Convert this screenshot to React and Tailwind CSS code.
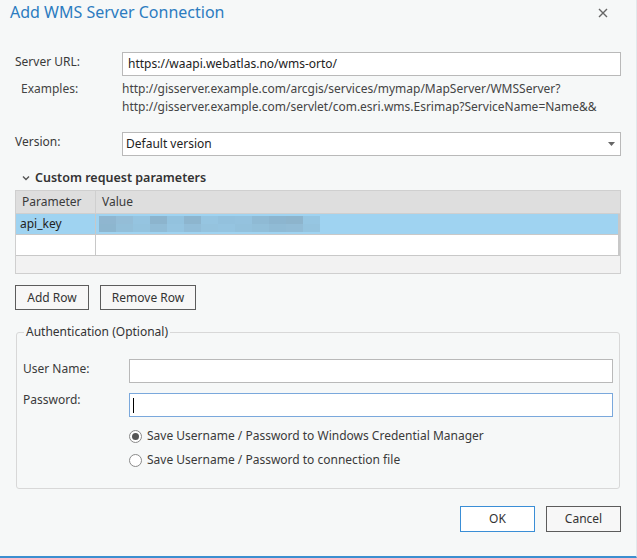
import { useState } from 'react';

const blurCells = [
    ['#8fb6d0', '#8db6cf'], ['#94bdd7', '#93bfd9'], ['#95c4e0', '#94c3de'], ['#8cb4cd', '#91bcd6'],
    ['#93c2de', '#95c4e0'], ['#8db5ce', '#92bdd8'], ['#96c5e1', '#95c3de'], ['#93c1dd', '#95c4e0'],
    ['#94c2de', '#93c1dc'], ['#8fbad4', '#92bfd9'], ['#8cb5cf', '#90bbd5'], ['#8db4cc', '#92bcd6'],
    ['#96c6e2', '#95c4df'],
];

export default function App() {
    const [saveTo, setSaveTo] = useState('windows');

    return (
        <div className="w-[637px] h-[558px] bg-[#f6f8f8] border-r border-r-[#e2e8eb] border-b-2 border-b-[#3c8fd0] font-['Noto_Sans',sans-serif] text-[12px] text-[#3a3a3a] flex flex-col">
            {/* title bar */}
            <div className="flex items-start justify-between h-[30px] pl-[10px] pr-[28px]">
                <h1 className="text-[16px] leading-[24px] text-[#2c7cc0]">Add WMS Server Connection</h1>
                <svg width="10" height="10" viewBox="0 0 10 10" className="mt-[8px]">
                    <path d="M1 1L9 9M9 1L1 9" stroke="#666" strokeWidth="1.4" />
                </svg>
            </div>

            <div className="px-[15px]">
                {/* server url */}
                <div className="flex items-start mt-[22px]">
                    <label className="w-[107px] pt-[1px] leading-[18px]">Server URL:</label>
                    <div className="flex-1 h-[24px] bg-white border border-[#b9b9b9] px-[5px] flex items-center text-[#222]">
                        https://waapi.webatlas.no/wms-orto/
                    </div>
                </div>

                {/* examples */}
                <div className="flex mt-[4px] leading-[18px] text-[#444]">
                    <span className="w-[107px] pl-[6px]">Examples:</span>
                    <div className="flex flex-col">
                        <span>http://gisserver.example.com/arcgis/services/mymap/MapServer/WMSServer?</span>
                        <span>http://gisserver.example.com/servlet/com.esri.wms.Esrimap?ServiceName=Name&amp;&amp;</span>
                    </div>
                </div>

                {/* version */}
                <div className="flex items-start mt-[16px]">
                    <label className="w-[107px] pt-[1px] leading-[18px]">Version:</label>
                    <div className="flex-1 h-[24px] bg-white border border-[#b9b9b9] pl-[3px] pr-[5px] flex items-center justify-between text-[#222]">
                        <span>Default version</span>
                        <svg width="7" height="4" viewBox="0 0 7 4">
                            <path d="M0 0H7L3.5 4Z" fill="#666" />
                        </svg>
                    </div>
                </div>

                {/* custom params header */}
                <div className="flex items-center mt-[12px] ml-[7px] h-[20px]">
                    <svg width="8" height="6" viewBox="0 0 8 6" className="mr-[5px]">
                        <path d="M1 1.5L4 4.5L7 1.5" stroke="#555" strokeWidth="1.4" fill="none" />
                    </svg>
                    <span className="text-[12.5px] font-semibold text-[#333]">Custom request parameters</span>
                </div>

                {/* params table */}
                <div className="mt-[2px] border border-[#cfcfcf] bg-[#f2f2f2]">
                    <div className="flex h-[23px] bg-[#dedede] border-b border-[#cfcfcf] items-center">
                        <div className="w-[80px] pl-[6px] border-r border-[#cfcfcf] h-full flex items-center">Parameter</div>
                        <div className="pl-[6px]">Value</div>
                    </div>
                    <div className="flex h-[21px] bg-[#9fd3f1] items-center border-b border-[#c8c8c8] border-r-2 border-r-[#c8c8c8]">
                        <div className="w-[80px] pl-[4px] border-r border-[#c8c8c8] h-full flex items-center text-[#222]">api_key</div>
                        <div className="pl-[3px] flex">
                            {blurCells.map((c, i) => (
                                <div key={i} className="flex flex-col">
                                    <div className="w-[17px] h-[8px]" style={{ backgroundColor: c[0] }} />
                                    <div className="w-[17px] h-[8px]" style={{ backgroundColor: c[1] }} />
                                </div>
                            ))}
                        </div>
                    </div>
                    <div className="flex h-[21px] bg-white border-b border-[#c8c8c8] border-r-2 border-r-[#c8c8c8]">
                        <div className="w-[80px] border-r border-[#c8c8c8] h-full" />
                    </div>
                    <div className="h-[17px]" />
                </div>

                {/* row buttons */}
                <div className="flex gap-[11px] mt-[11px]">
                    <button className="w-[74px] h-[25px] border border-[#5c5c5c] bg-[#f7f7f7] text-[#333]">Add Row</button>
                    <button className="w-[96px] h-[25px] border border-[#5c5c5c] bg-[#f7f7f7] text-[#333]">Remove Row</button>
                </div>

                {/* authentication group */}
                <fieldset className="mt-[13px] ml-[1px] mr-[1px] border border-[#d8d8d8] rounded-[3px] px-[6px] pb-[19px]">
                    <legend className="px-[2px] ml-[1px] text-[#333]">Authentication (Optional)</legend>
                    <div className="flex items-start mt-[18px]">
                        <label className="w-[106px] pt-[1px] leading-[18px]">User Name:</label>
                        <div className="flex-1 h-[24px] bg-white border border-[#b9b9b9]" />
                    </div>
                    <div className="flex items-start mt-[10px]">
                        <label className="w-[106px] leading-[18px] -mt-[2px]">Password:</label>
                        <div className="flex-1 h-[24px] bg-white border border-[#7aa8dc] flex items-center pl-[3px]">
                            <span className="w-px h-[15px] bg-black" />
                        </div>
                    </div>
                    <div className="ml-[106px] mt-[10px] flex flex-col gap-[6px]">
                        <label className="flex items-center gap-[5px] leading-[18px]" onClick={() => setSaveTo('windows')}>
                            <span className="w-[13px] h-[13px] rounded-full border border-[#8a8a8a] bg-white flex items-center justify-center">
                                {saveTo === 'windows' && <span className="w-[7px] h-[7px] rounded-full bg-[#555]" />}
                            </span>
                            Save Username / Password to Windows Credential Manager
                        </label>
                        <label className="flex items-center gap-[5px] leading-[18px]" onClick={() => setSaveTo('file')}>
                            <span className="w-[13px] h-[13px] rounded-full border border-[#8a8a8a] bg-white flex items-center justify-center">
                                {saveTo === 'file' && <span className="w-[7px] h-[7px] rounded-full bg-[#555]" />}
                            </span>
                            Save Username / Password to connection file
                        </label>
                    </div>
                </fieldset>

                {/* footer */}
                <div className="flex justify-end gap-[11px] mt-[17px]">
                    <button className="w-[75px] h-[26px] border border-[#3a8ed6] bg-white text-[#333]">OK</button>
                    <button className="w-[75px] h-[26px] border border-[#5c5c5c] bg-[#f7f7f7] text-[#333]">Cancel</button>
                </div>
            </div>
        </div>
    );
}
